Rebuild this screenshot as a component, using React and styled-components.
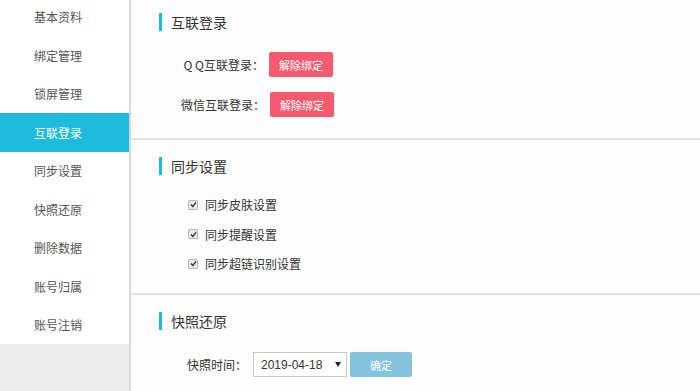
import React from 'react';
import styled, { createGlobalStyle } from 'styled-components';

const GlobalStyle = createGlobalStyle`
  html, body {
    margin: 0;
    padding: 0;
    background: #fdfdfd;
  }
  body {
    font-family: "Noto Sans CJK SC", "Liberation Sans", sans-serif;
    font-size: 12px;
    color: #333;
  }
`;

const Page = styled.div`
  display: flex;
  height: 391px;
  overflow: hidden;
`;

const Sidebar = styled.nav`
  width: 129px;
  flex-shrink: 0;
  background: #ececec;
  border-right: 2px solid #d9d9d9;
  overflow: hidden;
`;

const MenuList = styled.ul`
  list-style: none;
  margin: -2.5px 0 0;
  padding: 0;
`;

const MenuItem = styled.li`
  height: 38.5px;
  display: flex;
  align-items: center;
  padding-left: 34px;
  font-size: 12px;
  color: ${(p) => (p.$active ? '#fff' : '#555')};
  background: ${(p) => (p.$active ? '#1fbbde' : '#fff')};
`;

const Main = styled.main`
  flex: 1;
  background: #fdfdfd;
`;

const Section = styled.section`
  padding: ${(p) => p.$pad};
  height: ${(p) => p.$h};
  box-sizing: border-box;
  border-bottom: ${(p) => (p.$last ? 'none' : '2px solid #e2e2e2')};
`;

const SectionTitle = styled.h2`
  display: flex;
  align-items: center;
  gap: 9px;
  margin: 0 0 0 28px;
  height: 18px;
  font-size: 14px;
  font-weight: normal;
  color: #333;

  &::before {
    content: '';
    width: 3px;
    height: 18px;
    background: #1cb9e0;
  }
`;

const FormRow = styled.div`
  display: flex;
  align-items: center;
  margin-top: ${(p) => p.$mt};
`;

const Label = styled.span`
  width: ${(p) => p.$w};
  text-align: right;
  font-size: 12px;
  color: #333;
  margin-right: ${(p) => p.$gap};
`;

const Button = styled.button`
  width: ${(p) => p.$w};
  height: 25px;
  border: none;
  border-radius: 2px;
  padding: 0;
  font-family: inherit;
  font-size: 11px;
  color: #fff;
  background: ${(p) => p.$bg};
`;

const CheckList = styled.div`
  display: flex;
  flex-direction: column;
  margin: 15px 0 0 57px;
`;

const CheckRow = styled.label`
  display: flex;
  align-items: center;
  height: 29.5px;
  gap: 7px;
  font-size: 12px;
  color: #333;
`;

const Box = styled.span`
  width: 8px;
  height: 8px;
  border: 1px solid #b9b9b9;
  border-radius: 1px;
  background: #e9e9e9;
  display: flex;
  align-items: center;
  justify-content: center;
`;

const Select = styled.div`
  width: 94px;
  height: 25px;
  box-sizing: border-box;
  border: 1px solid #c8c8c8;
  background: #fff;
  display: flex;
  align-items: center;
  justify-content: space-between;
  padding: 0 5px 0 7px;
  font-family: "Liberation Sans", sans-serif;
  font-size: 12px;
  color: #333;
  margin-right: 3px;
`;

const Check = () => (
  <Box>
    <svg width="7" height="7" viewBox="0 0 7 7">
      <path d="M1 3.6 L2.8 5.4 L6 1.4" fill="none" stroke="#333" strokeWidth="1.4" />
    </svg>
  </Box>
);

const menu = ['基本资料', '绑定管理', '锁屏管理', '互联登录', '同步设置', '快照还原', '删除数据', '账号归属', '账号注销'];
const syncs = ['同步皮肤设置', '同步提醒设置', '同步超链识别设置'];

const App = () => {
  return (
    <>
      <GlobalStyle />
      <Page>
        <Sidebar>
          <MenuList>
            {menu.map((m) => (
              <MenuItem key={m} $active={m === '互联登录'}>
                {m}
              </MenuItem>
            ))}
          </MenuList>
        </Sidebar>
        <Main>
          <Section $pad="13px 0 0" $h="140px">
            <SectionTitle>互联登录</SectionTitle>
            <FormRow $mt="21px">
              <Label $w="133px" $gap="5px">Q Q互联登录：</Label>
              <Button $w="64px" $bg="#f55a6e">解除绑定</Button>
            </FormRow>
            <FormRow $mt="15px">
              <Label $w="134px" $gap="5px">微信互联登录：</Label>
              <Button $w="64px" $bg="#f55a6e">解除绑定</Button>
            </FormRow>
          </Section>
          <Section $pad="17px 0 0" $h="155px">
            <SectionTitle>同步设置</SectionTitle>
            <CheckList>
              {syncs.map((s) => (
                <CheckRow key={s}>
                  <Check />
                  {s}
                </CheckRow>
              ))}
            </CheckList>
          </Section>
          <Section $pad="17px 0 0" $last>
            <SectionTitle>快照还原</SectionTitle>
            <FormRow $mt="22px">
              <Label $w="116px" $gap="6px">快照时间：</Label>
              <Select>
                2019-04-18
                <svg width="6" height="5" viewBox="0 0 6 5">
                  <path d="M0 0 H6 L3 5 Z" fill="#222" />
                </svg>
              </Select>
              <Button $w="62px" $bg="#84c3df">确定</Button>
            </FormRow>
          </Section>
        </Main>
      </Page>
    </>
  );
};

export default App;
